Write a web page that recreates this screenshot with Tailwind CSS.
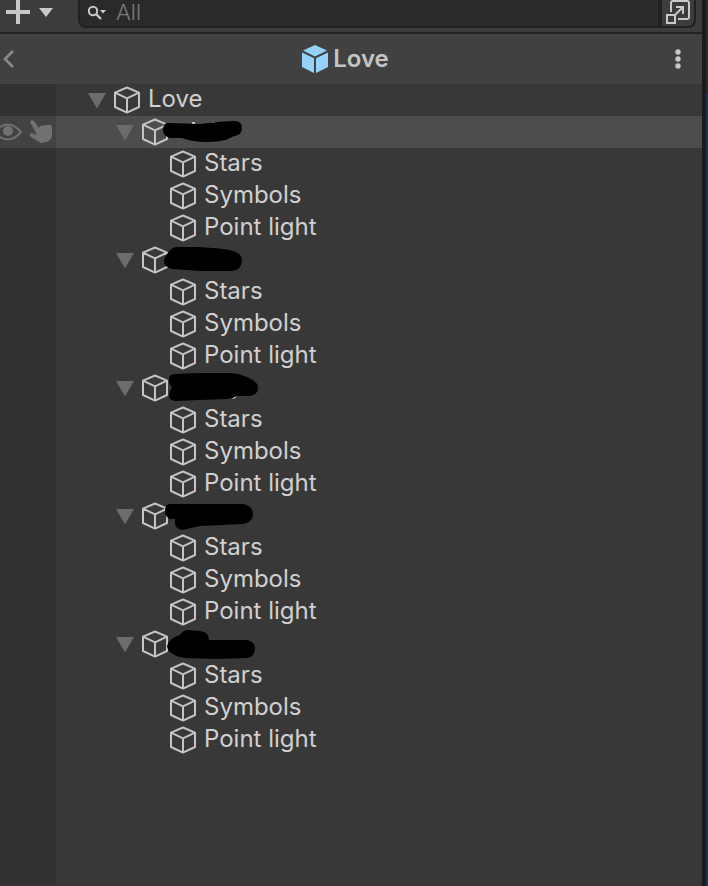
<!DOCTYPE html>
<html lang="en">
<head>
    <meta charset="UTF-8">
    <meta name="viewport" content="width=device-width, initial-scale=1.0">
    <title>Hierarchy - Love</title>
    <script src="https://cdn.jsdelivr.net/npm/@tailwindcss/browser@4"></script>
</head>
<body class="flex min-h-screen bg-[#383838] font-[Inter,sans-serif] text-[#d0d0d0]">
    <!-- Shared icons -->
    <svg class="hidden">
        <symbol id="cube" viewBox="0 0 26 28">
            <path d="M13 1.5 25 6.7V21L13 26.6 1 21V6.7ZM1 6.7 13 12.4 25 6.7M13 12.4V26.6" fill="none" stroke="#c4c4c4" stroke-width="2" stroke-linejoin="round"/>
        </symbol>
        <symbol id="arrow" viewBox="0 0 18 16">
            <path d="M0 1H18L9 16.5Z" fill="#6c6c6c"/>
        </symbol>
    </svg>

    <main class="flex min-w-0 flex-1 flex-col border-b border-[#3c3336]">
        <!-- Toolbar -->
        <div class="flex h-[34px] items-start border-b-2 border-[#232323] bg-[#3c3c3c] pr-1.5">
            <button type="button" aria-label="Create" class="flex w-[78px] items-start pl-1.5">
                <svg class="h-6 w-12" viewBox="0 0 48 24" fill="#c8c8c8">
                    <path d="M10 0h4v10h10v4H14v10h-4V14H0v-4h10ZM33 8H47L40 17Z"/>
                </svg>
            </button>
            <div class="flex h-7 min-w-0 flex-1 overflow-hidden rounded-b-lg border-2 border-t-0 border-[#212121] bg-[#2a2a2a]">
                <label for="search" class="pl-2">
                    <svg class="h-6 w-5" viewBox="0 0 20 24" fill="none">
                        <circle cx="5" cy="11" r="4.2" stroke="#c8c8c8" stroke-width="2"/>
                        <path d="m8 14 5 5" stroke="#c8c8c8" stroke-width="2.4"/>
                        <path d="M12 10h6l-3 3.5Z" fill="#c8c8c8"/>
                    </svg>
                </label>
                <input id="search" type="text" placeholder="All" class="h-6 min-w-0 flex-1 pl-2 text-[22px] leading-6 font-light outline-none placeholder:text-[#7a7a7a]">
                <button type="button" aria-label="Open in search window" class="w-9 border-l-4 border-[#212121] bg-[#3c3c3c] pl-1">
                    <svg class="h-[26px] w-6" viewBox="0 0 24 26" fill="none" stroke="#c8c8c8" stroke-width="2">
                        <path d="M5 12V3Q5 1 7 1H21Q23 1 23 3V17Q23 19 21 19H12"/>
                        <path d="M1 15H9V23H1ZM9 15 17 7M10 7H17V14"/>
                    </svg>
                </button>
            </div>
        </div>

        <!-- Prefab header -->
        <header class="flex h-[50px] items-center justify-between bg-[#414141]">
            <button type="button" aria-label="Back" class="w-11 pl-0.5">
                <svg class="h-5 w-3" viewBox="0 0 12 20" fill="none" stroke="#8a8a8a" stroke-width="2.6">
                    <path d="M11 2 3 10 11 18"/>
                </svg>
            </button>
            <h1 class="flex items-center gap-1 text-2xl font-semibold text-[#c4c4c4]">
                <svg class="h-7 w-7" viewBox="0 0 28 28" fill="#94d2fa">
                    <path d="M14 0 26 5.5 14 11.5 2 5.5ZM1 7.5 13 13.3V28L1 22ZM27 7.5 15 13.3V28L27 22Z"/>
                </svg>
                Love
            </h1>
            <button type="button" aria-label="More options" class="flex w-14 justify-end pr-5">
                <svg class="h-6 w-2" viewBox="0 0 8 24" fill="#c8c8c8">
                    <circle cx="4" cy="5" r="2.7"/>
                    <circle cx="4" cy="12" r="2.7"/>
                    <circle cx="4" cy="19" r="2.7"/>
                </svg>
            </button>
        </header>

        <!-- Object tree, rows are added by the script -->
        <ul id="tree"></ul>
        <div class="flex flex-1">
            <div class="w-14 bg-[#313131]"></div>
        </div>
    </main>

    <!-- Edge of the neighbouring panel -->
    <div class="flex w-1.5 flex-col border-l-4 border-[#1b1b1b] bg-[#23364f]">
        <div class="h-[94px] bg-[#2c2c2c]"></div>
    </div>

    <script>
        // Marker strokes drawn over the group names
        const groups = [
            {
                selected: true,
                mark: 'M3 14Q3 7 8 7L40 8 57 6Q70 5 76 5 82 6 82 12 82 17 78 19 73 20 66 24 57 26 47 26 32 26 22 22L10 22Q3 20 3 14Z',
                rest: 'M32 6h3v3h-3ZM52 6h3v3h-3Z',
            },
            { mark: 'M4 17Q4 12 8 9 12 3 16 3L37 3Q55 4 63 5 82 7 82 16 82 26 72 27L40 27 12 25Q4 23 4 17Z', rest: '' },
            { mark: 'M9 8Q9 2 14 2L40 1H72Q80 2 87 5 98 10 98 15 98 23 90 24L77 24Q73 26 67 27L40 28 15 29Q9 28 9 24 9 19 12 15 9 13 9 8Z', rest: 'M72 27q4 0 5-4' },
            { mark: 'M5 11Q5 4 10 4H83Q93 6 93 14 93 22 83 24L40 26Q30 28 23 30 15 29 15 23L15 19H10Q5 17 5 11Z', rest: '' },
            { mark: 'M7 18Q9 10 20 7 23 2 28 2L40 3Q49 4 49 12H87Q95 14 95 20 95 29 87 30L57 31 25 30Q8 27 7 18Z', rest: '' },
        ];
        const children = ['Stars', 'Symbols', 'Point light'];

        const arrow = `
            <button type="button" aria-label="Collapse" class="mr-2">
                <svg class="h-4 w-[18px]"><use href="#arrow"/></svg>
            </button>`;
        const cube = '<svg class="h-7 w-[26px] shrink-0"><use href="#cube"/></svg>';

        const visibility = `
            <button type="button" aria-label="Toggle visibility">
                <svg class="h-8 w-7" viewBox="0 0 28 32">
                    <path d="M-6 16Q8 1 21 16 8 31-6 16Z" fill="none" stroke="#717171" stroke-width="2"/>
                    <circle cx="8" cy="15" r="5" fill="#717171"/>
                </svg>
            </button>
            <button type="button" aria-label="Toggle picking">
                <svg class="h-8 w-7" viewBox="0 0 28 32" fill="#717171">
                    <path d="M2 6Q3 3 6 5L11 12Q13 8 16 10 18 8 20 9 24 8 24 12L24 20Q23 24 19 26L13 27 3 21Q0 18 4 17L9 19Z"/>
                </svg>
            </button>`;

        function row(indent, content, selected) {
            const li = document.createElement('li');
            li.className = selected ? 'flex h-8 bg-[#4d4d4d]' : 'flex h-8';
            li.innerHTML = `
                <div class="${selected ? 'flex w-14 bg-[#424242]' : 'w-14 bg-[#313131]'}">${selected ? visibility : ''}</div>
                <div class="flex items-center ${indent}">${content}</div>
            `;
            document.getElementById('tree').appendChild(li);
        }

        const label = (name) => `<span class="pb-0.5 pl-2 text-2xl leading-7">${name}</span>`;

        row('pl-8', arrow + cube + label('Love'));

        groups.forEach((group) => {
            row('pl-[60px]', `${arrow}${cube}
                <svg class="relative -ml-2 h-8 w-[100px]" viewBox="0 0 100 32" role="img" aria-label="Hidden name">
                    <path d="${group.rest}" fill="#d0d0d0"/>
                    <path d="${group.mark}" fill="#000"/>
                </svg>`, group.selected);
            children.forEach((name) => row('pl-[114px]', cube + label(name)));
        });
    </script>
</body>
</html>
